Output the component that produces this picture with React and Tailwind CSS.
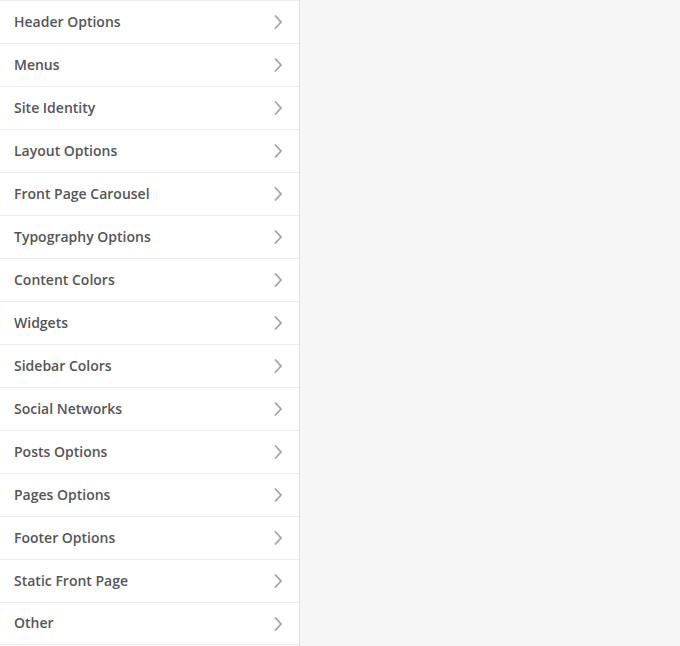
import React from "react";

const items = [
  "Header Options",
  "Menus",
  "Site Identity",
  "Layout Options",
  "Front Page Carousel",
  "Typography Options",
  "Content Colors",
  "Widgets",
  "Sidebar Colors",
  "Social Networks",
  "Posts Options",
  "Pages Options",
  "Footer Options",
  "Static Front Page",
  "Other",
];

function Chevron() {
  return (
    <svg width="10" height="16" viewBox="0 0 10 16" className="text-[#a0a5aa]">
      <path d="M2 1.5 L8 8 L2 14.5" fill="none" stroke="currentColor" strokeWidth="1.8" />
    </svg>
  );
}

export default function App() {
  return (
    <div className="flex h-[646px] w-[680px] bg-[#f5f5f5]" style={{ fontFamily: '"Open Sans", sans-serif' }}>
      <div className="w-[300px] shrink-0 border-r border-[#dddddd] bg-white">
        {items.map((t, i) => (
          <div
            key={t}
            className={`flex h-[43px] items-center justify-between border-t border-[#eeeeee] pl-[14px] pr-[16px] ${i === items.length - 1 ? "border-b" : ""}`}
          >
            <span className="mb-[2px] text-[14px] font-semibold text-[#555555]">{t}</span>
            <Chevron />
          </div>
        ))}
      </div>
      <div className="flex-1" />
    </div>
  );
}
